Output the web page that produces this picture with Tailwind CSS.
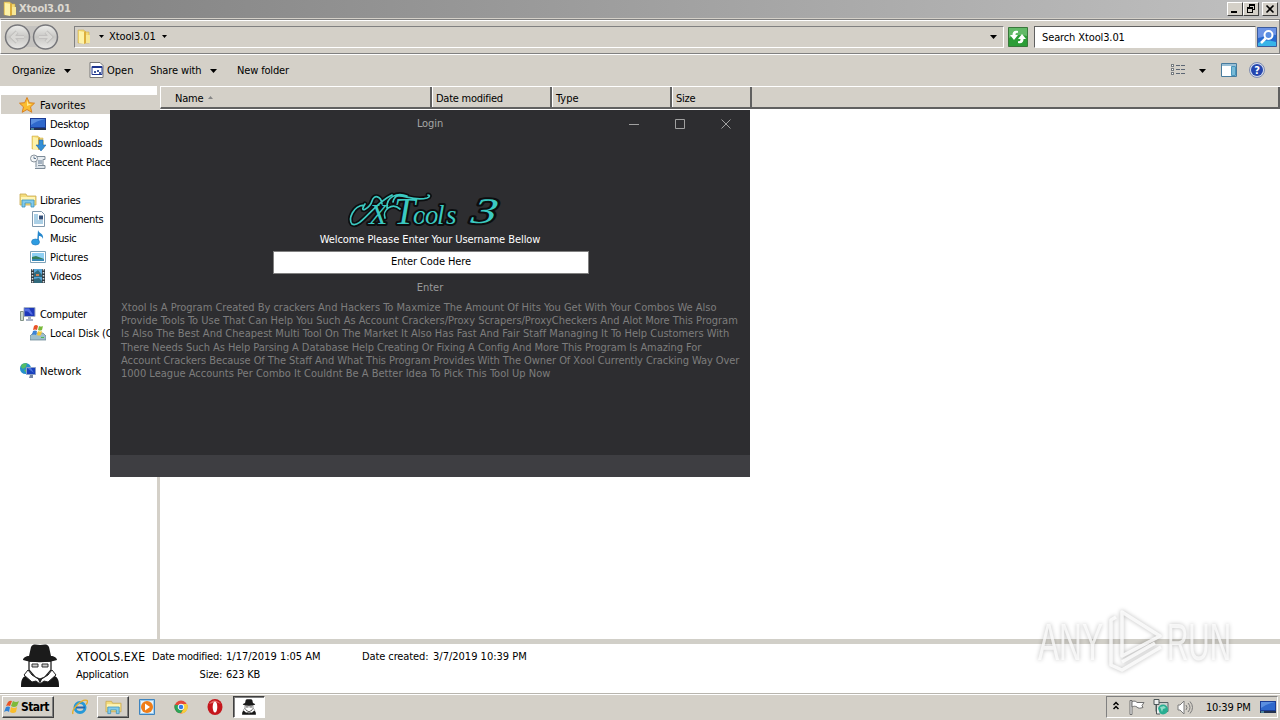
<!DOCTYPE html>
<html lang="en">
<head>
    <meta charset="UTF-8">
    <meta name="viewport" content="width=device-width, initial-scale=1.0">
    <title>Xtool3.01</title>
    <script src="https://cdn.jsdelivr.net/npm/@tailwindcss/browser@4"></script>
</head>
<body class="w-[1280px] h-[720px] overflow-hidden bg-white text-black text-[11px] leading-[19px] font-['DejaVu_Sans_Condensed','DejaVu_Sans',sans-serif] font-stretch-condensed whitespace-nowrap">

    <!-- Shared icons -->
    <svg class="hidden">
        <symbol id="folder" viewBox="0 0 16 16">
            <path d="M2 1h6l1 2h4v11H2z" fill="#f3d976" stroke="#c9a63f" stroke-width=".5"/>
            <path d="M3 2l5 1v12l-5-1z" fill="#fdf2a8"/>
            <path d="M8 3l2-1v12l-2 1z" fill="#dcae3c"/>
            <path d="M10 6h4v8h-4z" fill="#f7e796"/>
        </symbol>
        <symbol id="library" viewBox="0 0 18 16">
            <path d="M1 2h6l1 2h9v9H1z" fill="#f3dc7c" stroke="#c8a850" stroke-width=".8"/>
            <path d="M2 5h14v3H2z" fill="#fff5b5"/>
            <path d="M3 15V8h12v7h-3v-4H6v4z" fill="#83cbed" stroke="#3a92bd" stroke-width=".8"/>
        </symbol>
        <symbol id="monitor" viewBox="0 0 16 14">
            <path d="M0 1h16v10H0z" fill="#1b3c94"/>
            <path d="M1 2h14v8H1z" fill="#2f68cc"/>
            <path d="M1 2h14Q6 4 1 8z" fill="#5b8fe0"/>
            <path d="M0 11h16v2H0z" fill="#24324f"/>
            <path d="M1 11.5h3v1H1z" fill="#70d2e5"/>
        </symbol>
        <symbol id="spy" viewBox="0 0 40 44">
            <path d="M1 43c0-8 1-10 8-13l22 0c7 3 8 5 8 13z" fill="#161616"/>
            <path d="M9 17h22v9l-6 7-5 2-5-2-6-7z" fill="#fff" stroke="#222" stroke-width="1.300"/>
            <path d="M8 26l-4 5 8 7 4-1 4 3 4-3 4 1 8-7-4-5-4 5-8 5-8-5z" fill="#fff" stroke="#222"/>
            <path d="M9 12l2-9c2-4 6-2 9-2s7-2 9 2l2 9c3 0 6 2 6 4-9 3-25 3-34 0 0-2 3-4 6-4z" fill="#1b1b1b"/>
            <path d="M12 20h6v3h-6zM22 20h6v3h-6z" fill="#ccc" stroke="#333"/>
            <path d="M18 35l2 5 2-5z" fill="#222"/>
        </symbol>
    </svg>

    <div class="flex flex-col h-full">

        <!-- Window caption -->
        <div class="h-[18px] shrink-0 flex items-center bg-linear-to-r from-[#808080] to-[#c0c0c0] pl-[2px] pr-[2px]">
            <svg class="w-4 h-4"><use href="#folder"/></svg>
            <span class="ml-[1px] text-[#dcd8d0] font-bold tracking-[-0.25px] leading-[18px]">Xtool3.01</span>
            <div class="ml-auto flex">
                <div class="w-4 h-[14px] bg-[#d4d0c8] border border-t-white border-l-white border-b-[#404040] border-r-[#404040]">
                    <svg class="w-[14px] h-3" shape-rendering="crispEdges"><path d="M3 8h6v2H3z"/></svg>
                </div>
                <div class="w-4 h-[14px] bg-[#d4d0c8] border border-t-white border-l-white border-b-[#404040] border-r-[#404040]">
                    <svg class="w-[14px] h-3" shape-rendering="crispEdges" fill="none" stroke="#000"><path d="M5.500 4V1.500H10.500V6.500H9M5 2.500h6M3.500 4.500h5v5h-5zM3 5.500h6"/></svg>
                </div>
                <div class="ml-[3px] w-4 h-[14px] bg-[#d4d0c8] border border-t-white border-l-white border-b-[#404040] border-r-[#404040]">
                    <svg class="w-[14px] h-3" stroke="#000" stroke-width="1.6"><path d="M3.500 2.500l7 7M10.500 2.500l-7 7"/></svg>
                </div>
            </div>
        </div>

        <!-- Address bar -->
        <div class="h-[36px] shrink-0 bg-[#d4d0c8] pt-[1px]">
            <div class="h-[35px] flex items-center border border-t-[#808080] border-l-white border-r-[#808080] border-b-[#808080] shadow-[inset_0_1px_0_#fff]">
                <svg class="w-[56px] h-[30px] ml-[3px]" fill="none">
                    <defs>
                        <linearGradient id="knob" x1="0" y1="0" x2="0" y2="1">
                            <stop offset="0" stop-color="#eeeeec"/>
                            <stop offset=".5" stop-color="#c8c7c4"/>
                            <stop offset="1" stop-color="#e9e8e6"/>
                        </linearGradient>
                    </defs>
                    <path d="M13 4h28v21H13z" fill="#c5c3c0"/>
                    <circle cx="13.500" cy="15" r="12" fill="url(#knob)" stroke="#77777b" stroke-width="1.500"/>
                    <circle cx="41.500" cy="15" r="12" fill="url(#knob)" stroke="#77777b" stroke-width="1.500"/>
                    <path d="M20 15H8M13 10l-5 5 5 5M35 15h12M42 10l5 5-5 5" stroke="#bab9b7" stroke-width="4"/>
                    <path d="M20 15H8M13 10l-5 5 5 5M35 15h12M42 10l5 5-5 5" stroke="#d9d8d5" stroke-width="2.500"/>
                </svg>
                <div class="ml-[14px] w-[930px] h-[22px] flex items-center border border-t-[#808080] border-l-[#808080] border-b-white border-r-white">
                    <svg class="w-4 h-4 ml-[1px]"><use href="#folder"/></svg>
                    <svg class="w-[5px] h-[3px] ml-[7px]"><path d="M0 0h5L2.500 3z"/></svg>
                    <span class="ml-[5px] w-[46px] tracking-[-0.1px]">Xtool3.01</span>
                    <svg class="w-[5px] h-[3px] ml-[7px]"><path d="M0 0h5L2.500 3z"/></svg>
                    <svg class="w-[7px] h-1 ml-auto mr-[6px]"><path d="M0 0h7L3.500 4z"/></svg>
                </div>
                <svg class="w-5 h-5 ml-[4px]">
                    <path d="M.5.5h19v19H.5z" fill="#2b9d36" stroke="#39773b"/>
                    <path d="M1 1h18v8C12 7 7 8 1 11z" fill="#62b967"/>
                    <path d="M10 4C6 3 4.500 5 4.500 8H2l4 5 4-5H7.500c0-2 1-2.500 2.500-2zM10 16c4 1 5.500-1 5.500-4H18l-4-5-4 5h2.500c0 2-1 2.500-2.500 2z" fill="#fff"/>
                </svg>
                <div class="ml-[6px] w-[222px] h-[22px] bg-white border border-t-[#606060] border-l-[#606060] border-b-white border-r-[#d4d0c8] pl-[7px] leading-[21px] tracking-[-0.12px]">Search Xtool3.01</div>
                <svg class="w-5 h-5 ml-[1px]">
                    <path d="M.5.5h19v19H.5z" fill="#2769cf" stroke="#3c5b9b"/>
                    <path d="M1 1h18v7C13 6 7 10 1 11z" fill="#6c93e5"/>
                    <path d="M1 16c6-3 12-3 18-1v4H1z" fill="#38b4e8"/>
                    <circle cx="11.500" cy="8" r="4" fill="#5a8ee3" stroke="#fff" stroke-width="2"/>
                    <path d="M8.500 11.500L4 16" stroke="#fff" stroke-width="2.500"/>
                </svg>
            </div>
        </div>

        <!-- Command bar -->
        <div class="h-8 shrink-0 flex items-center bg-[#d4d0c8] border-t border-white pl-3">
            <span class="w-[45px] tracking-[-0.15px]">Organize</span>
            <svg class="w-[7px] h-1 ml-[7px]"><path d="M0 0h7L3.500 4z"/></svg>
            <svg class="w-[15px] h-4 ml-[18px] mb-[2px]">
                <path d="M1 .5h10l3 3v12H1z" fill="#fff" stroke="#767676"/>
                <path d="M3 4.500h10v8H3z" fill="#fff" stroke="#1d348e"/>
                <path d="M3 4h10v2H3z" fill="#1d348e"/>
                <path d="M5 9h2v2H5zM8 8h2v2H8zM10 10h2v2h-2z" fill="#40589d"/>
            </svg>
            <span class="ml-[3px] w-[27px]">Open</span>
            <span class="ml-[16px] w-[53px] tracking-[-0.12px]">Share with</span>
            <svg class="w-[7px] h-1 ml-[7px]"><path d="M0 0h7L3.500 4z"/></svg>
            <span class="ml-[20px] tracking-[-0.15px]">New folder</span>
            <svg class="w-4 h-3 ml-auto mb-[2px]" shape-rendering="crispEdges">
                <path d="M.5.5h2v2h-2zM.5 4.500h2v2h-2zM.5 8.500h2v2h-2z" fill="#fff" stroke="#777c80"/>
                <path d="M5 1.500h4M10 1.500h4M5 5.500h4M10 5.500h4M5 9.500h4M10 9.500h4" stroke="#5c6674"/>
            </svg>
            <svg class="w-[7px] h-1 ml-[12px]"><path d="M0 0h7L3.500 4z"/></svg>
            <svg class="w-4 h-[14px] ml-[15px] mb-[2px]">
                <path d="M.5.5h15v13H.5z" fill="#fff" stroke="#477b9d"/>
                <path d="M1 1h14v2H1z" fill="#98bfd6"/>
                <path d="M10.500 3.500h4v9h-4z" fill="#78bad7" stroke="#4795bc"/>
            </svg>
            <svg class="w-4 h-4 ml-3 mr-[15px] mb-[2px]">
                <circle cx="8" cy="8" r="7.500" fill="#d5dcee" stroke="#7e8cb0"/>
                <circle cx="8" cy="8" r="6" fill="#2546af"/>
                <text x="8" y="12" text-anchor="middle" class="text-[11px] font-bold fill-white">?</text>
            </svg>
        </div>

        <!-- Panes -->
        <div class="h-[553px] shrink-0 flex">
            <div class="w-[157px] pt-[9px] pl-[1px] overflow-hidden [&_span]:pt-[2px]">
                <div class="h-[19px] flex items-center bg-[#d4d0c8] pl-[18px]">
                    <svg class="w-4 h-4"><path d="M8 .5l2.300 5.200 5.200.5-4 3.700 1.300 5.400L8 12.500l-4.800 2.800 1.300-5.400-4-3.700 5.200-.5z" fill="#fbbd2e" stroke="#d98221"/><path d="M8 3l1.500 4 3 .3L8 9z" fill="#ffec95"/></svg>
                    <span class="ml-[5px] tracking-[0.1px]">Favorites</span>
                </div>
                <div class="h-[19px] flex items-center pl-[29px]">
                    <svg class="w-4 h-[14px]"><use href="#monitor"/></svg>
                    <span class="ml-1 tracking-[-0.25px]">Desktop</span>
                </div>
                <div class="h-[19px] flex items-center pl-[29px]">
                    <svg class="w-4 h-4"><use href="#folder"/><path d="M9 5h4v5h3l-5 6-5-6h3z" fill="#338fd6" stroke="#2169ae" stroke-width=".6"/></svg>
                    <span class="ml-1 tracking-[-0.25px]">Downloads</span>
                </div>
                <div class="h-[19px] flex items-center pl-[29px]">
                    <svg class="w-4 h-4"><path d="M4 2.500h11v3h-2v8H6V5z" fill="#e7ecf0" stroke="#7d8b98"/><path d="M5 14.500h10v-3H8" fill="#dce3e9" stroke="#7d8b98"/><circle cx="4" cy="4.500" r="3.500" fill="#f4f6f7" stroke="#89939d"/><path d="M4 2.500v2h2M8 7h4M8 9h4" fill="none" stroke="#627890"/></svg>
                    <span class="ml-1 tracking-[-0.2px]">Recent Places</span>
                </div>
                <div class="h-[19px] mt-[19px] flex items-center pl-[18px]">
                    <svg class="w-[18px] h-4"><use href="#library"/></svg>
                    <span class="ml-[3px] tracking-[-0.25px]">Libraries</span>
                </div>
                <div class="h-[19px] flex items-center pl-[29px]">
                    <svg class="w-4 h-4"><path d="M2.500.5h9l3 3v12h-12z" fill="#fff" stroke="#8098ad"/><path d="M4 4h4M4 6h4M4 8h4M4 10h9M4 12h9" stroke="#58a0cc"/><path d="M9 4.500h4v4H9z" fill="#334e77"/></svg>
                    <span class="ml-1 tracking-[-0.35px]">Documents</span>
                </div>
                <div class="h-[19px] flex items-center pl-[29px]">
                    <svg class="w-4 h-4"><path d="M8 0c1 4 6 3 5 9-1-3-3-3-4-3l-.5 7H7z" fill="#2587cd"/><ellipse cx="5.500" cy="12" rx="4" ry="3" fill="#2e9ce1" stroke="#1b74b8" stroke-width=".6"/></svg>
                    <span class="ml-1 tracking-[-0.35px]">Music</span>
                </div>
                <div class="h-[19px] flex items-center pl-[29px]">
                    <svg class="w-4 h-3"><path d="M.5.5h15v11H.5z" fill="#fff" stroke="#7da2b9"/><path d="M2 2h12v8H2z" fill="#8fd0f4"/><path d="M2 6l4-1 8 3v2H2z" fill="#35805c"/><path d="M2 8h12v2H2z" fill="#3788b5"/></svg>
                    <span class="ml-1 tracking-[-0.1px]">Pictures</span>
                </div>
                <div class="h-[19px] flex items-center pl-[29px]">
                    <svg class="w-4 h-4"><path d="M1 1h14v14H1z" fill="#303940"/><path d="M4 1h8v14H4z" fill="#55a4d7"/><path d="M4 5l4-3 4 5v2H4zM4 11l5-1 3 3v2H4z" fill="#316a7c"/><path d="M6 6h3v2H6z" fill="#d17f56"/><path d="M2.500 1v14M13.500 1v14" stroke="#d9e1e5" stroke-width="1.500" stroke-dasharray="1.500 1.500"/></svg>
                    <span class="ml-1 tracking-[-0.25px]">Videos</span>
                </div>
                <div class="h-[19px] mt-[19px] flex items-center pl-[18px]">
                    <svg class="w-[18px] h-4"><path d="M1.500 5.500h3v9h-3z" fill="#cbd8cc" stroke="#819385"/><path d="M5 1.500h11v9H5z" fill="#1d38ba" stroke="#a5b1c4"/><path d="M6 2.500h4l4 6c-4 1-3-4-8-3z" fill="#536ee3"/><path d="M9 11h3v2h2v2H7v-2h2z" fill="#a9b4c7"/></svg>
                    <span class="ml-[3px] tracking-[-0.3px]">Computer</span>
                </div>
                <div class="h-[19px] flex items-center pl-[29px]">
                    <svg class="w-4 h-4"><path d="M0 11l3-3h10l3 3v4H0z" fill="#9ebecb" stroke="#607e8c" stroke-width=".7"/><path d="M4 1q2-2 4 0l-1 4q-2-1-4 0z" fill="#e85227"/><path d="M9 1q2 1 4 0l-1 4q-2 1-4 0z" fill="#79b93a"/><path d="M3 6q2-1 4 0l-1 4q-2-1-4 0z" fill="#3c83d6"/><path d="M8 6q2 1 4 0l-1 4q-2 1-4 0z" fill="#f6c733"/><path d="M11 12.500h3" stroke="#49bb55"/></svg>
                    <span class="ml-1 tracking-[-0.1px]">Local Disk (C:)</span>
                </div>
                <div class="h-[19px] mt-[19px] flex items-center pl-[18px]">
                    <svg class="w-[18px] h-4"><circle cx="6.500" cy="5.500" r="5.500" fill="#268fcb"/><path d="M3 1l5-1-1 4-3 2-2-2zM5 7l3-1v5z" fill="#53bd65"/><path d="M7.500 4.500h9v7h-9z" fill="#1840bc" stroke="#8fa1c6"/><path d="M8 5h4l3 5z" fill="#4b74df"/><path d="M11 12h3v3h-4z" fill="#7586a3"/></svg>
                    <span class="ml-[3px]">Network</span>
                </div>
            </div>
            <div class="w-[3px] bg-[#d4d0c8]"></div>
            <div class="w-[1120px]">
                <div class="h-[23px] flex leading-[24px] bg-[#d4d0c8] border-t border-l border-white border-b-2 border-b-[#606060]">
                    <div class="w-[271px] flex border-r-2 border-[#606060] pl-[14px]">
                        <span class="tracking-[-0.2px]">Name</span>
                        <svg class="w-[5px] h-[3px] ml-[5px] mt-[9px]"><path d="M0 3h5L2.500 0z" fill="#858585"/></svg>
                    </div>
                    <div class="w-[120px] border-r-2 border-[#606060] border-l border-l-white pl-[3px] tracking-[-0.25px]">Date modified</div>
                    <div class="w-[120px] border-r-2 border-[#606060] border-l border-l-white pl-[3px]">Type</div>
                    <div class="w-[80px] border-r-2 border-[#606060] border-l border-l-white pl-[3px] tracking-[-0.25px]">Size</div>
                    <div class="grow border-r-2 border-[#606060]"></div>
                </div>
            </div>
        </div>

        <!-- Details pane -->
        <div class="h-[54px] shrink-0 flex border-t-5 border-[#d1cfc8] bg-white">
            <svg class="w-10 h-11 ml-5"><use href="#spy"/></svg>
            <div class="ml-4 pt-1 w-[76px] leading-[18px]">
                <div class="text-[12px] tracking-[0.1px]">XTOOLS.EXE</div>
                <div class="tracking-[-0.25px]">Application</div>
            </div>
            <div class="pt-1 w-[70px] text-right leading-[18px]">
                <div class="tracking-[-0.25px]">Date modified:</div>
                <div class="tracking-[-0.25px]">Size:</div>
            </div>
            <div class="pt-1 pl-1 w-[140px] leading-[18px]">
                <div>1/17/2019 1:05 AM</div>
                <div class="tracking-[-0.2px]">623 KB</div>
            </div>
            <div class="pt-1 w-[71px] leading-[18px] tracking-[-0.1px]">Date created:</div>
            <div class="pt-1 leading-[18px]">3/7/2019 10:39 PM</div>
        </div>

        <!-- Taskbar -->
        <div class="h-[27px] shrink-0 flex items-center bg-[#d4d0c8] border-t border-[#b8b5ae] shadow-[inset_0_1px_0_#fff] pl-[2px] pr-[2px]">
            <div class="w-[52px] h-[22px] flex items-center bg-[#d4d0c8] border border-t-white border-l-white border-r-[#404040] border-b-[#404040] shadow-[inset_-1px_-1px_0_#808080]">
                <svg class="w-[15px] h-[14px] ml-[1px]"><path d="M4 2q2-2 4-1L6 6Q4 5 2 6z" fill="#ea5325"/><path d="M9 1q3 2 6 0l-2 5q-3 2-6 0z" fill="#7eba3b"/><path d="M2 7q2-1 4 0l-1 5q-2-2-5 0z" fill="#3183d7"/><path d="M7 7q3 2 6 0l-1 5q-3 2-6 0z" fill="#f9bd2c"/></svg>
                <span class="ml-[2px] font-bold text-[12px] tracking-[-0.6px]">Start</span>
            </div>
            <svg class="w-4 h-4 ml-[18px]" fill="none"><circle cx="8" cy="8.500" r="5" stroke="#2799d8" stroke-width="3"/><path d="M4 8.500h9" stroke="#2367af" stroke-width="2"/><path d="M1 15C-1 11 10-1 15 1.500c1 1 0 3-1 4" stroke="#e5ae2c" stroke-width="1.400"/></svg>
            <div class="ml-[9px] w-8 h-[22px] flex items-center justify-center border border-t-white border-l-white border-r-[#404040] border-b-[#404040] shadow-[inset_-1px_-1px_0_#808080]">
                <svg class="w-[17px] h-4"><use href="#library"/></svg>
            </div>
            <svg class="w-4 h-4 ml-[10px]"><path d="M.5.5h15v15H.5z" fill="#9dcbed" stroke="#3e84bf"/><path d="M2 2h12v12H2z" fill="#e6f4fd"/><circle cx="8" cy="8" r="6" fill="#ef7d18"/><path d="M6 4.500l5 3.500-5 3.500z" fill="#fff"/></svg>
            <svg class="w-[14px] h-[14px] ml-[19px]"><circle cx="7" cy="7" r="6.500" fill="#e5483a"/><path d="M1 4L5 13a6.500 6.500 0 0 1-4-9z" fill="#279f54"/><path d="M1 5l3 8h3l3-5-4-3z" fill="#2ea55a"/><path d="M7 4h6a6.500 6.500 0 0 1-6 9.500L10 8z" fill="#f7ce3b"/><circle cx="7" cy="7" r="2.800" fill="#347ae6" stroke="#fff"/></svg>
            <svg class="w-4 h-4 ml-[19px]"><ellipse cx="8" cy="8" rx="7.500" ry="8" fill="#c5161c"/><path d="M2 5q5-7 12 0l-5-2z" fill="#e36d6c"/><ellipse cx="8" cy="8" rx="2.300" ry="5.500" fill="#fff"/></svg>
            <div class="ml-[10px] w-8 h-[22px] flex items-center justify-center bg-white border border-t-[#404040] border-l-[#404040] border-r-white border-b-white shadow-[inset_1px_1px_0_#808080]">
                <svg class="w-4 h-4"><use href="#spy"/></svg>
            </div>

            <div class="ml-auto w-[172px] h-[22px] flex items-center border border-t-[#808080] border-l-[#808080] border-r-white border-b-white">
                <svg class="w-[6px] h-[9px] ml-[6px] mb-[3px]" fill="none" stroke="#000" stroke-width="1.500"><path d="M.5 4L3 1.500 5.500 4M.5 8L3 5.500 5.500 8"/></svg>
                <svg class="w-4 h-4 ml-[10px]" fill="#fff" stroke="#6f6f6f"><path d="M1 1.500h2v14H1z"/><path d="M3 2.500c3-1 4 0 5 1h7l-2 3 1 2c-3 1-5 1-6-.5-2-1-3-1-5 0z"/></svg>
                <svg class="w-4 h-4 ml-[8px]"><path d="M3 3.500h12v9H3z" fill="#cbd1ce" stroke="#586367"/><circle cx="10" cy="10.500" r="5" fill="#28ae91"/><path d="M7 8l4-1 2 2-3 1-1 3z" fill="#8fdcc7"/><path d="M1 .5h5v5H1zM3.500 5.500V15H7" fill="#eee" stroke="#4d5758"/></svg>
                <svg class="w-[17px] h-[15px] ml-[8px]" fill="none" stroke="#7a7a7a"><path d="M1 5h2l4-4v13l-4-4H1z" fill="#fff"/><path d="M9 5q2 2.500 0 5M11 3q4 4.500 0 9M13 1.500q5 6 0 12"/></svg>
                <span class="ml-[12px] w-[46px] tracking-[-0.2px]">10:39 PM</span>
                <svg class="w-4 h-[14px] ml-[8px]"><use href="#monitor"/></svg>
            </div>
        </div>
    </div>

    <!-- Login dialog -->
    <div class="absolute left-[110px] top-[110px] w-[640px] h-[367px] flex flex-col bg-[#2d2d30] text-[#999999] text-center">
        <div class="h-[27px] grid grid-cols-[251px_138px_251px] items-center">
            <span class="col-start-2 tracking-[-0.1px] text-[#a5a5a5]">Login</span>
            <svg class="w-[105px] h-3 ml-[130px]" fill="none" stroke="#a0a0a0"><path d="M0 6.500h10M46.500 1.500h9v9h-9z"/><path d="M92.500 1.500l9 9M101.500 1.500l-9 9"/></svg>
        </div>
        <!-- Logo lettering with swashes on the X and T -->
        <svg class="w-[170px] h-[46px] mt-[49px] ml-[233px] shrink-0" fill="none">
            <defs>
                <path id="swash" d="M21 19C10 20 5 33 9 38c8 5 22-21 40-29M22 18C15 29 27 22 29 15c2-7 9-5 10 3M57 23C49 16 39 24 42 32M50 16C53 2 67 17 84 12c3-1 3-3 1-3M44 22C43 11 54 6 64 10"/>
            </defs>
            <use href="#swash" stroke="#0c0d0f" stroke-width="5" stroke-linecap="round"/>
            <g class="font-['Liberation_Serif',serif] italic fill-[#3bc9c1] stroke-[#0c0d0f] [stroke-width:4px] [paint-order:stroke] [stroke-linejoin:round]">
                <text y="38"><tspan x="26" class="text-[30px]">X</tspan><tspan x="51" class="text-[38px]">T</tspan><tspan x="70 82 94 103" class="text-[27px]">ools</tspan></text>
                <text transform="translate(127 37) skewX(-12) scale(1.4 1)" class="text-[36px]">3</text>
            </g>
            <use href="#swash" stroke="#3bc9c1" stroke-width="1.700" stroke-linecap="round"/>
        </svg>
        <div class="h-[19px] -mt-[2px] text-white tracking-[-0.07px]">Welcome Please Enter Your Username Bellow</div>
        <div class="mt-[2px] w-[316px] h-[23px] ml-[163px] bg-white border border-[#808080] text-black leading-[19px] tracking-[-0.12px]">Enter Code Here</div>
        <div class="h-[19px] mt-[4px]">Enter</div>
        <div class="mt-[4px] pl-[11px] text-left leading-[13.200px] text-[#7d7d7d]">
            <div class="tracking-[-0.01px]">Xtool Is A Program Created By crackers And Hackers To Maxmize The Amount Of Hits You Get With Your Combos We Also</div>
            <div class="tracking-[-0.01px]">Provide Tools To Use That Can Help You Such As Account Crackers/Proxy Scrapers/ProxyCheckers And Alot More This Program</div>
            <div class="tracking-[0.01px]">Is Also The Best And Cheapest Multi Tool On The Market It Also Has Fast And Fair Staff Managing It To Help Customers With</div>
            <div class="tracking-[-0.06px]">There Needs Such As Help Parsing A Database Help Creating Or Fixing A Config And More This Program Is Amazing For</div>
            <div class="tracking-[-0.07px]">Account Crackers Because Of The Staff And What This Program Provides With The Owner Of Xool Currently Cracking Way Over</div>
            <div class="tracking-[0.01px]">1000 League Accounts Per Combo It Couldnt Be A Better Idea To Pick This Tool Up Now</div>
        </div>
        <div class="mt-auto h-[22px] bg-[#3e3e42]"></div>
    </div>

    <!-- Watermark -->
    <svg class="absolute left-[1030px] top-[600px] w-[220px] h-[80px] drop-shadow-[0_0_2px_#00000055]" fill="none">
        <g class="font-['Liberation_Sans',sans-serif] text-[51px] fill-white/75">
            <text transform="translate(8 60) scale(.62 1)">ANY</text>
            <text transform="translate(137 60) scale(.58 1)">RUN</text>
        </g>
        <path d="M92 12v44l38-20zM86 17l-5 3v45l11 5 39-23M92 62l33-19" stroke="#fff" stroke-width="3.500" stroke-linejoin="round" opacity=".8"/>
    </svg>
</body>
</html>
